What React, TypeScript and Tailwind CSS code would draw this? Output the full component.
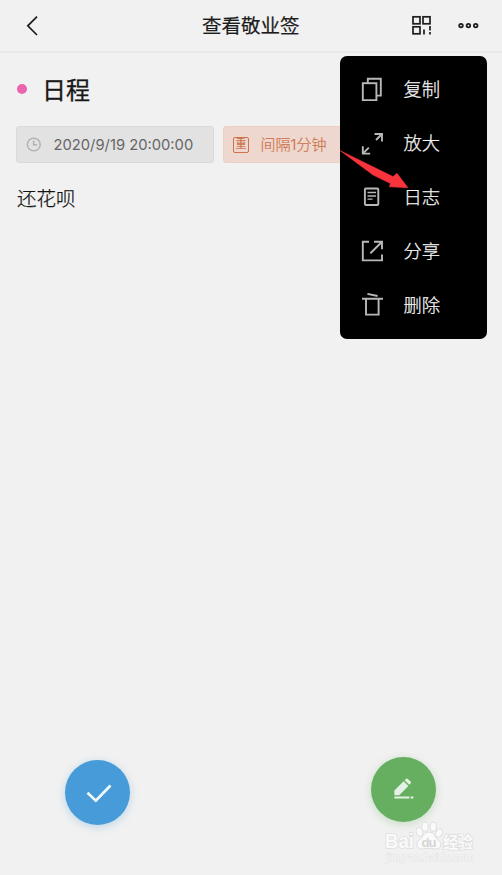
import type { ReactNode } from "react";

const items: { label: string; icon: ReactNode }[] = [
  {
    label: "复制",
    icon: (
      <>
        <rect x="2.8" y="6.2" width="13.6" height="17" />
        <path d="M7.8 6V1.8H20.8V18.6H16.6" />
      </>
    ),
  },
  {
    label: "放大",
    icon: (
      <>
        <path d="M14.5 3H22V10.5M22 3L16 9" />
        <path d="M2.8 15.2V22.6H10.2M2.8 22.6L8.8 16.6" />
      </>
    ),
  },
  {
    label: "日志",
    icon: (
      <>
        <rect x="4.9" y="3.5" width="13.4" height="16.5" rx="1" />
        <path d="M7.5 7.5H16M7.5 11H16M7.5 14.2H12.5" strokeWidth="1.3" />
      </>
    ),
  },
  {
    label: "分享",
    icon: (
      <path d="M9 2.8H2.8V21.4H22V15.6M14 2.8H22V10.2M22 2.8L10.4 14.2" />
    ),
  },
  {
    label: "删除",
    icon: <path d="M2 5.8H23M6 5.8V21.6H18.6V5.8M7.4 .9L17.6 3" />,
  },
];

function Header() {
  return (
    <header className="flex h-[53px] items-center border-b-2 border-[#e8e8e8] pl-6 pr-5">
      <svg width="18" height="24" viewBox="0 0 18 24" fill="none" stroke="#1c1c1c" strokeWidth="1.7">
        <path d="M13 2.6L3.8 11.8L13 21" />
      </svg>
      <h1 className="ml-40 pt-0.5 text-[19.5px] leading-none whitespace-nowrap text-[#1c1c1c] [-webkit-text-stroke:0.2px_#1c1c1c]">
        查看敬业签
      </h1>
      <svg className="ml-auto" width="22" height="22" viewBox="0 0 22 22" fill="none" stroke="#1e1e20" strokeWidth="1.7">
        <rect x="2" y="1.8" width="7" height="7" />
        <rect x="12" y="1.8" width="7" height="7" />
        <rect x="2" y="11.8" width="7" height="7" />
        <path d="M13 14.5V19.6M19 11V15.5M19 17V19.6" />
      </svg>
      <svg className="ml-[25px]" width="24" height="10" viewBox="0 0 24 10" fill="none" stroke="#1e1e20" strokeWidth="1.8">
        <circle cx="3" cy="4.6" r="1.8" />
        <circle cx="10.4" cy="4.6" r="1.8" />
        <circle cx="17.7" cy="4.6" r="1.8" />
      </svg>
    </header>
  );
}

function Menu() {
  return (
    <div className="absolute left-[340px] top-14 h-[283px] w-[147px] rounded-[7px] bg-black pt-1.5">
      {items.map((item) => (
        <div key={item.label} className="flex h-[54px] items-center gap-[19.5px] pl-5">
          <svg width="24" height="24" viewBox="0 0 24 24" fill="none" stroke="#b8b8b8" strokeWidth="1.9">
            {item.icon}
          </svg>
          <span className="pt-px text-[18.3px] leading-none font-light text-[#f6f6f6] [-webkit-text-stroke:0.25px_#f6f6f6]">{item.label}</span>
        </div>
      ))}
      <svg className="absolute left-0 top-[94px]" width="70" height="40" viewBox="0 0 70 40">
        <path d="M0 .6L53 26.6L57 23.3L68 37.7L49.2 36.8L50.5 33.6L33 25Z" fill="#f8333b" stroke="#f8333b" strokeWidth=".5" />
      </svg>
    </div>
  );
}

function Watermark() {
  return (
    <div className="absolute left-[385px] top-[820px] h-[46px] w-[92px] font-['Liberation_Sans','Noto_Sans_CJK_SC',sans-serif]">
      <svg width="92" height="46" viewBox="0 0 92 46">
        <g fill="#fafafa" stroke="#dedede" strokeWidth="1">
          <ellipse cx="34.5" cy="12" rx="3.3" ry="4.5" transform="rotate(-15 34.5 12)" />
          <ellipse cx="40" cy="6.7" rx="3.2" ry="4.6" />
          <ellipse cx="48.3" cy="6.7" rx="3.2" ry="4.6" />
          <ellipse cx="54" cy="13" rx="3.3" ry="4.4" transform="rotate(18 54 13)" />
          <path d="M44 12C38 12 38 18 34 20C30 23 32 30 38 29C42 28 46 28 50 29C56 30 58 23 53 20C49 17 50 12 44 12Z" />
          <g fontWeight="bold" paintOrder="stroke" strokeWidth="1.6">
            <text x="0" y="28" fontSize="20" textLength="29" lengthAdjust="spacingAndGlyphs">Bai</text>
            <text x="58" y="28" fontSize="15.5" textLength="30">经验</text>
          </g>
        </g>
        <text x="36.5" y="27" fontSize="13" fontWeight="bold" fill="#d5d5d5" textLength="15">du</text>
        <text x="1" y="41" fontSize="11" fill="#f7f7f7" stroke="#e3e3e3" strokeWidth="1" paintOrder="stroke" textLength="88">jingyan.baidu.com</text>
      </svg>
    </div>
  );
}

export default function App() {
  return (
    <div className="relative flex h-[875px] w-[502px] flex-col overflow-hidden bg-[#f1f1f1] font-['Inter','Noto_Sans_CJK_SC',sans-serif]">
      <Header />
      <main className="px-4 pt-[25px]">
        <div className="flex h-6 items-center">
          <span className="mt-[-2px] ml-px size-2.5 rounded-full bg-[#eb64ae]" />
          <h2 className="ml-[15px] pt-0.5 text-[24px] leading-none text-[#181818] [-webkit-text-stroke:0.3px_#181818]">日程</h2>
        </div>
        <div className="mt-6 flex gap-[9px]">
          <div className="flex h-[37px] w-[198px] shrink-0 items-center rounded-[3px] border border-[#dadada] bg-[#e2e2e2] pl-[9px]">
            <svg width="16" height="16" viewBox="0 0 16 16" fill="none" stroke="#b0b0b0" strokeWidth="1.4">
              <circle cx="7.8" cy="7.5" r="6.4" />
              <path d="M7.6 3.5V7.8H11" />
            </svg>
            <span className="ml-[11.5px] pt-px text-[14.75px] whitespace-nowrap text-[#666]">2020/9/19 20:00:00</span>
          </div>
          <div className="flex h-[37px] w-[140px] shrink-0 items-center rounded-[3px] border border-[#ecd0c5] bg-[#eed7ce] pl-[9px] text-[#cd734a]">
            <span className="flex size-4 items-center justify-center rounded-[2px] border border-[#cd734a] text-[11px] leading-none font-medium">重</span>
            <span className="ml-[11.5px] pt-px text-[15px] font-light whitespace-nowrap [-webkit-text-stroke:0.2px_#cd734a]">间隔1分钟</span>
          </div>
        </div>
        <p className="ml-px mt-[21px] text-[19.5px] leading-[30px] font-light text-[#141414] [-webkit-text-stroke:0.25px_#141414]">还花呗</p>
      </main>
      <footer className="mt-auto flex justify-between pb-[50px] pl-[65px] pr-[66px]">
        <button className="mt-[3px] flex size-[65px] items-center justify-center rounded-full bg-[#479bd8] shadow-[0_2px_9px_#479bd850]">
          <svg width="30" height="24" viewBox="0 0 30 24" fill="none" stroke="#f1fbff" strokeWidth="2.7">
            <path d="M4.5 11.8L12.8 19.7L27.5 4.5" />
          </svg>
        </button>
        <button className="mb-[3px] flex size-[65px] items-center justify-center rounded-full bg-[#66af61] shadow-[0_2px_9px_#66af6150]">
          <svg width="24" height="24" viewBox="0 0 24 24" fill="#e4f2e6">
            <path d="M2.4 17.2V12.4L11.6 3.3L16.4 7.9L7.2 17.2Z" />
            <path d="M12.6 2.3L14.2 .8Q14.9 .2 15.6 .8L18.7 3.8Q19.4 4.6 18.7 5.3L17.3 6.8Z" />
            <path d="M2.4 18.6H17.4V20.6H2.4ZM18.7 18.6H21.4V20.6H18.7Z" />
          </svg>
        </button>
      </footer>
      <Menu />
      <Watermark />
    </div>
  );
}
